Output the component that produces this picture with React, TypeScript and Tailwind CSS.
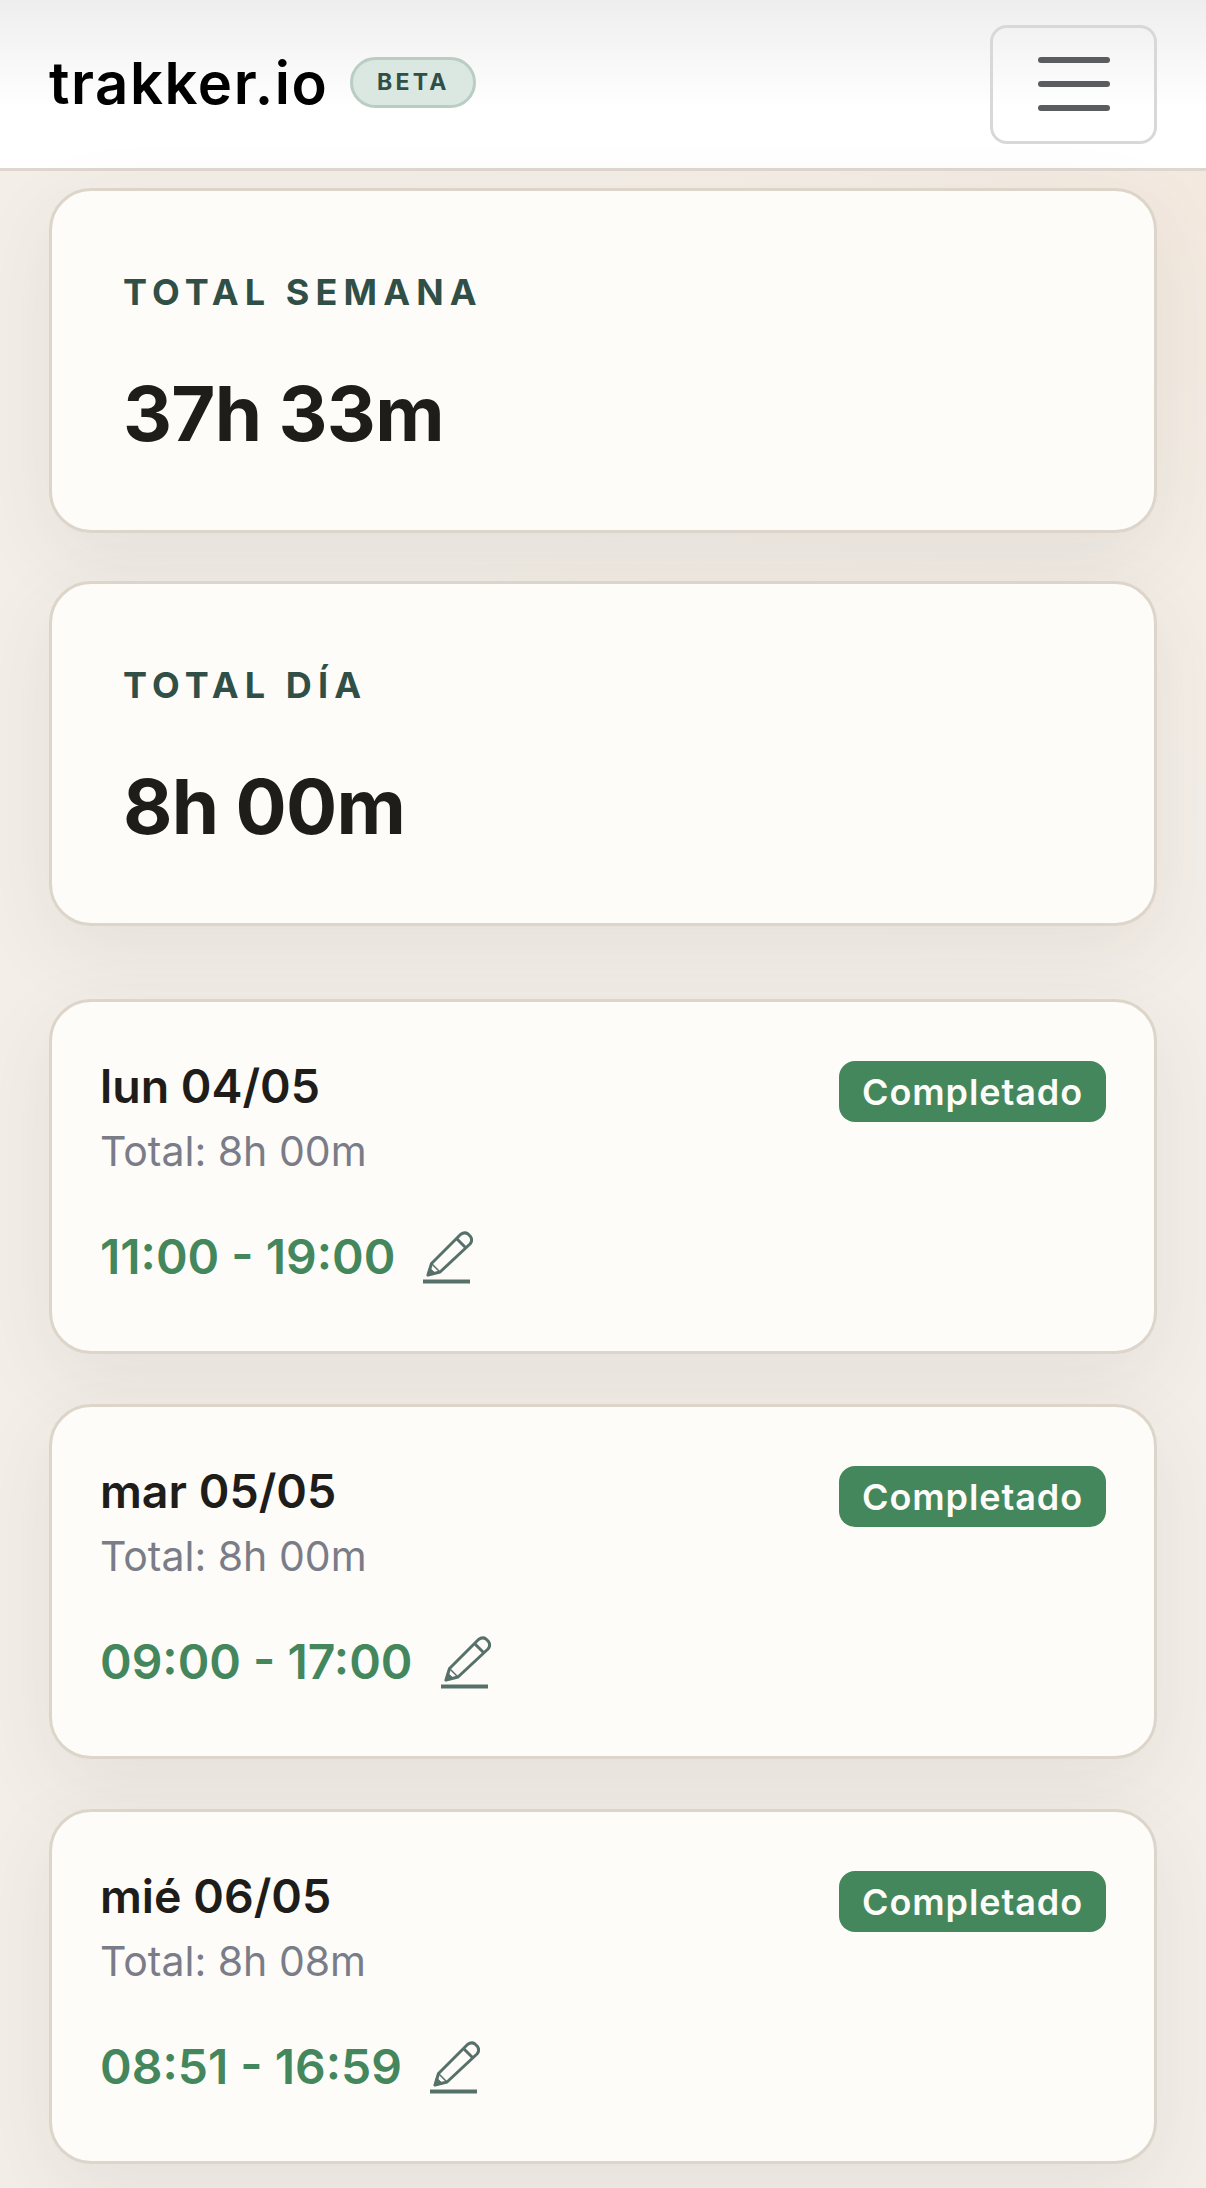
const DAYS = [
  { date: 'lun 04/05', total: 'Total: 8h 00m', range: '11:00 - 19:00' },
  { date: 'mar 05/05', total: 'Total: 8h 00m', range: '09:00 - 17:00' },
  { date: 'mié 06/05', total: 'Total: 8h 08m', range: '08:51 - 16:59' },
];

const SUMMARY = [
  { label: 'TOTAL SEMANA', value: '37h 33m' },
  { label: 'TOTAL DÍA', value: '8h 00m' },
];

function PencilIcon() {
  return (
    <svg viewBox="0 0 50 54" className="w-[50px] h-[54px] shrink-0" fill="none" stroke="#56706a">
      <path d="M5 45 L8.500 33.500 L37.500 4.500 Q41.500 1.500 45 4 L47.500 6.500 Q50 10.500 47 14 L17 42 Z" strokeWidth="3" strokeLinejoin="round" />
      <path d="M33.500 8.500 L43 18" strokeWidth="3" />
      <path d="M8.500 33.500 L17 42" strokeWidth="1.500" />
      <path d="M4 46 L6.500 38 L12 43 Z" fill="#56706a" strokeWidth="1" />
      <path d="M0 51.500 H47" strokeWidth="4" />
    </svg>
  );
}

export default function App() {
  return (
    <div className="h-[2188px] overflow-hidden bg-[#f3eee8] bg-[radial-gradient(circle_at_100%_8%,#f3e9df_0%,#f3ede6_16%,transparent_36%)] font-['Inter','Liberation_Sans',sans-serif]">
      <header className="h-[171px] flex items-center justify-between pl-[49px] pr-[49px] border-b-[3px] border-[#dfd7cf] bg-gradient-to-b from-[#eeeeee] to-white to-[65%]">
        <div className="flex items-center gap-[22px] -mt-[3px]">
          <span className="text-[58px] leading-none font-semibold tracking-[0.027em] text-black">trakker.io</span>
          <span className="h-[51px] w-[126px] flex items-center justify-center rounded-full border-[3px] border-[#b9cdc5] bg-[#dae8e1] text-[23px] font-bold tracking-[0.14em] text-[#2f4f47]">
            BETA
          </span>
        </div>
        <button className="w-[167px] h-[119px] flex flex-col items-center justify-center gap-[18px] rounded-[17px] border-[3px] border-[#d8d8d8]">
          <span className="w-[72px] h-[6px] rounded-full bg-[#5a5c60]" />
          <span className="w-[72px] h-[6px] rounded-full bg-[#5a5c60]" />
          <span className="w-[72px] h-[6px] rounded-full bg-[#5a5c60]" />
        </button>
      </header>

      <main className="px-[49px] pt-[17px]">
        <div className="flex flex-col gap-[48px]">
          {SUMMARY.map((s) => (
            <section
              key={s.label}
              className="h-[345px] pl-[71px] pt-[79px] rounded-[42px] border-[3px] border-[#ddd5ca] bg-[#fdfcf9] shadow-[0_24px_80px_rgba(70,60,50,0.08)]"
            >
              <div className="text-[36px] leading-[44px] font-bold tracking-[0.17em] text-[#2f4f47]">{s.label}</div>
              <div className="mt-[54px] text-[76px] leading-[90px] font-bold tracking-[-0.01em] text-[#1f1d1a]">{s.value}</div>
            </section>
          ))}
        </div>

        <div className="flex flex-col gap-[50px] mt-[73px]">
          {DAYS.map((d) => (
            <section
              key={d.date}
              className="h-[355px] px-[48px] pt-[56px] rounded-[42px] border-[3px] border-[#ddd5ca] bg-[#fdfcf9] shadow-[0_24px_80px_rgba(70,60,50,0.08)]"
            >
              <div className="flex items-start justify-between">
                <div>
                  <div className="text-[46.500px] leading-[56px] font-semibold text-[#1f1d1a]">{d.date}</div>
                  <div className="mt-[12px] text-[41px] leading-[50px] text-[#7a7d88]">{d.total}</div>
                </div>
                <span className="mt-[3px] h-[61px] w-[267px] flex items-center justify-center rounded-[16px] bg-[#44875c] text-[36px] font-semibold tracking-[0.025em] text-[#fdfcf9]">
                  Completado
                </span>
              </div>
              <div className="mt-[52px] flex items-center gap-[28px]">
                <span className="text-[48px] leading-[58px] font-semibold text-[#44875c]">{d.range}</span>
                <PencilIcon />
              </div>
            </section>
          ))}
        </div>
      </main>
    </div>
  );
}
